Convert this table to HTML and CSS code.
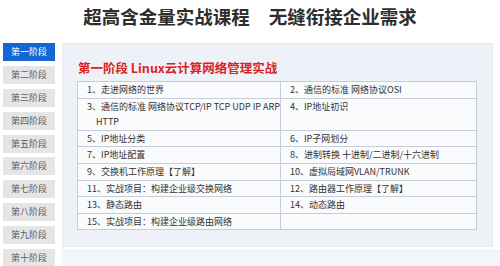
FILE: index.html
```html
<!DOCTYPE html>
<html lang="zh">
<head>
<meta charset="utf-8">
<link rel="stylesheet" href="styles.css">
</head>
<body>
<header class="top">
  <h1 class="headline"><span>超高含金量实战课程</span><span class="gap">无缝衔接企业需求</span></h1>
</header>
<main class="main">
  <nav class="tabs">
    <div class="tab active">第一阶段</div>
    <div class="tab">第二阶段</div>
    <div class="tab">第三阶段</div>
    <div class="tab">第四阶段</div>
    <div class="tab">第五阶段</div>
    <div class="tab">第六阶段</div>
    <div class="tab">第七阶段</div>
    <div class="tab">第八阶段</div>
    <div class="tab">第九阶段</div>
    <div class="tab">第十阶段</div>
  </nav>
  <div class="right">
    <section class="panel">
      <h2 class="stage">第一阶段 Linux云计算网络管理实战</h2>
      <table class="grid">
        <tr><td>1、走进网络的世界</td><td>2、通信的标准 网络协议OSI</td></tr>
        <tr><td>3、通信的标准 网络协议TCP/IP TCP UDP IP ARP<span class="cont">HTTP</span></td><td>4、IP地址初识</td></tr>
        <tr><td>5、IP地址分类</td><td>6、IP子网划分</td></tr>
        <tr><td>7、IP地址配置</td><td>8、进制转换 十进制/二进制/十六进制</td></tr>
        <tr><td>9、交换机工作原理【了解】</td><td>10、虚拟局域网VLAN/TRUNK</td></tr>
        <tr><td>11、实战项目：构建企业级交换网络</td><td>12、路由器工作原理【了解】</td></tr>
        <tr><td>13、静态路由</td><td>14、动态路由</td></tr>
        <tr><td>15、实战项目：构建企业级路由网络</td><td></td></tr>
      </table>
    </section>
    <div class="strip"></div>
  </div>
</main>
</body>
</html>
```

FILE: styles.css
```css
html, body {
  margin: 0;
  padding: 0;
  background: #ffffff;
  font-family: "Noto Sans CJK SC", "Noto Sans", sans-serif;
  overflow: hidden;
}

.top {
  height: 43px;
  box-sizing: border-box;
  padding-top: 4px;
}

.headline {
  margin: 0;
  text-align: center;
  font-size: 18.5px;
  line-height: 25px;
  font-weight: 700;
  color: #2e2e2e;
}

.headline .gap {
  margin-left: 19px;
}

.main {
  display: flex;
  align-items: flex-start;
  gap: 7px;
  padding-left: 3px;
  height: 223px;
  overflow: hidden;
}

.tabs {
  display: flex;
  flex-direction: column;
  gap: 4.9px;
  width: 52px;
  flex-shrink: 0;
}

.tab {
  height: 18px;
  line-height: 18px;
  flex-shrink: 0;
  text-align: center;
  font-size: 9px;
  color: #5e5e5e;
  background: #e5e5e5;
}

.tab.active {
  background: #1467d2;
  color: #ffffff;
}

.right {
  display: flex;
  flex-direction: column;
  gap: 3px;
  flex: 1;
}

.panel {
  width: 431px;
  height: 204px;
  box-sizing: border-box;
  background: #eef1f8;
  border: 1px solid #e6eaf3;
  padding: 14px 15px 0 14px;
}

.stage {
  margin: 0 0 0 1px;
  font-size: 12.5px;
  line-height: 19px;
  font-weight: 700;
  color: #d9241c;
  height: 23px;
}

.grid {
  border-collapse: collapse;
  width: 400px;
  font-size: 9px;
  color: #333333;
  background: #fafbfd;
}

.grid td {
  border: 1px solid #c8ccd6;
  padding: 0 0 0 9px;
  line-height: 15.6px;
  white-space: nowrap;
  vertical-align: top;
}

.grid td:first-child {
  width: 192px;
}

.cont {
  display: block;
  padding-left: 9px;
}

.strip {
  height: 20px;
  background: #f3f5fa;
  border-top: 1px solid #e9ecf3;
}
```
